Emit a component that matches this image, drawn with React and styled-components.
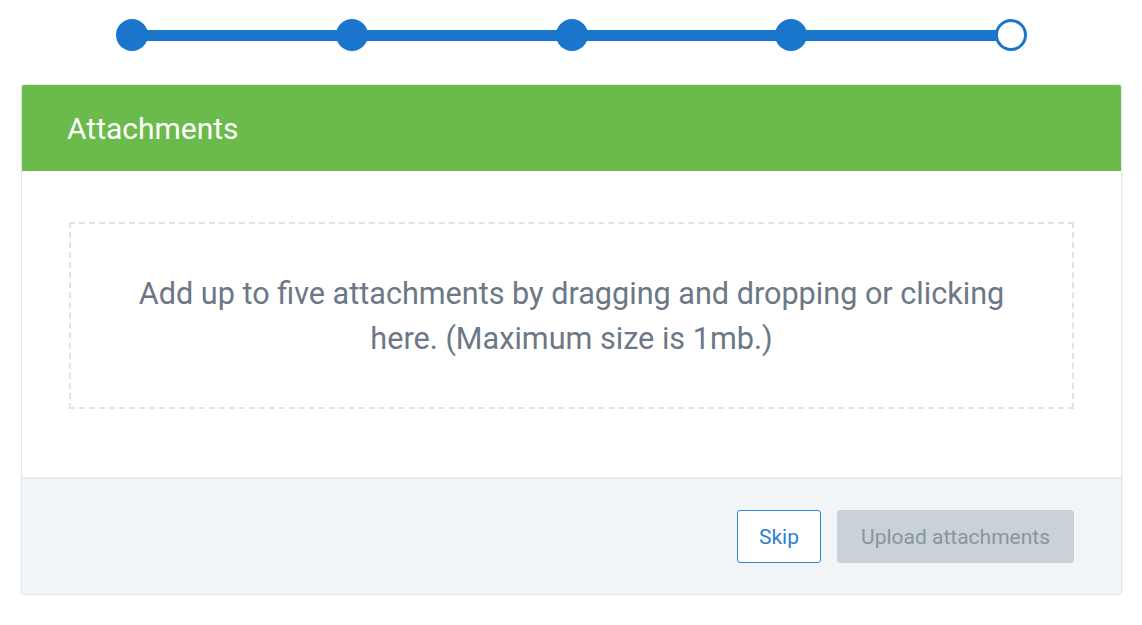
import React from 'react';
import styled, { createGlobalStyle } from 'styled-components';

const GlobalStyle = createGlobalStyle`
  html, body {
    margin: 0;
    padding: 0;
    background: #ffffff;
    font-family: Roboto, "Liberation Sans", Arial, sans-serif;
  }
`;

const Page = styled.div`
  display: flex;
  flex-direction: column;
  padding: 19px 20px 0 21px;
`;

const Stepper = styled.div`
  display: flex;
  align-items: center;
  margin: 0 95px 0 95px;
  height: 32px;
`;

const Dot = styled.div`
  width: ${(p) => (p.$done ? '32px' : '26px')};
  height: ${(p) => (p.$done ? '32px' : '26px')};
  border-radius: 50%;
  flex-shrink: 0;
  background: ${(p) => (p.$done ? '#1a76cc' : '#ffffff')};
  border: ${(p) => (p.$done ? 'none' : '3px solid #1a76cc')};
`;

const Line = styled.div`
  flex: 1;
  height: 11px;
  background: #1a76cc;
  margin: 0 -2px;
`;

const Card = styled.div`
  margin-top: 33px;
  border: 1px solid #e2e7ea;
  border-radius: 3px;
  overflow: hidden;
  box-shadow: 0 1px 3px rgba(0, 0, 0, 0.07);
`;

const Header = styled.div`
  background: #6bbb4c;
  height: 86px;
  display: flex;
  align-items: center;
  padding: 0 45px;
  color: #ffffff;
  font-size: 30px;
`;

const Body = styled.div`
  background: #ffffff;
  padding: 51px 47px 68px 47px;
  border-bottom: 2px solid #e6ebee;
`;

const DropZone = styled.div`
  height: 183px;
  border: 2px dashed #dfe4e7;
  display: flex;
  align-items: center;
  justify-content: center;
  text-align: center;
  padding: 0 50px;
  color: #6c7885;
  font-size: 30.6px;
  line-height: 45px;
  cursor: pointer;
`;

const Footer = styled.div`
  background: #f2f5f8;
  height: 115px;
  display: flex;
  align-items: center;
  justify-content: flex-end;
  gap: 16px;
  padding: 0 47px;
`;

const Button = styled.button`
  height: 53px;
  padding: 0 ${(p) => (p.$primary ? '23px' : '21px')};
  border-radius: 3px;
  font-family: Roboto, "Liberation Sans", Arial, sans-serif;
  font-size: 21px;
  border: ${(p) => (p.$primary ? '1px solid #c9d2d7' : '1px solid #2f84d6')};
  background: ${(p) => (p.$primary ? '#c9d2d7' : '#ffffff')};
  color: ${(p) => (p.$primary ? '#8b959c' : '#2f7fd1')};
  cursor: pointer;
`;

const steps = [true, true, true, true, false];

const App = () => (
  <>
    <GlobalStyle />
    <Page>
      <Stepper>
        {steps.map((done, i) => (
          <React.Fragment key={i}>
            {i > 0 && <Line />}
            <Dot $done={done} />
          </React.Fragment>
        ))}
      </Stepper>
      <Card>
        <Header>Attachments</Header>
        <Body>
          <DropZone>
            Add up to five attachments by dragging and dropping or clicking here. (Maximum size is 1mb.)
          </DropZone>
        </Body>
        <Footer>
          <Button>Skip</Button>
          <Button $primary disabled>Upload attachments</Button>
        </Footer>
      </Card>
    </Page>
  </>
);

export default App;
